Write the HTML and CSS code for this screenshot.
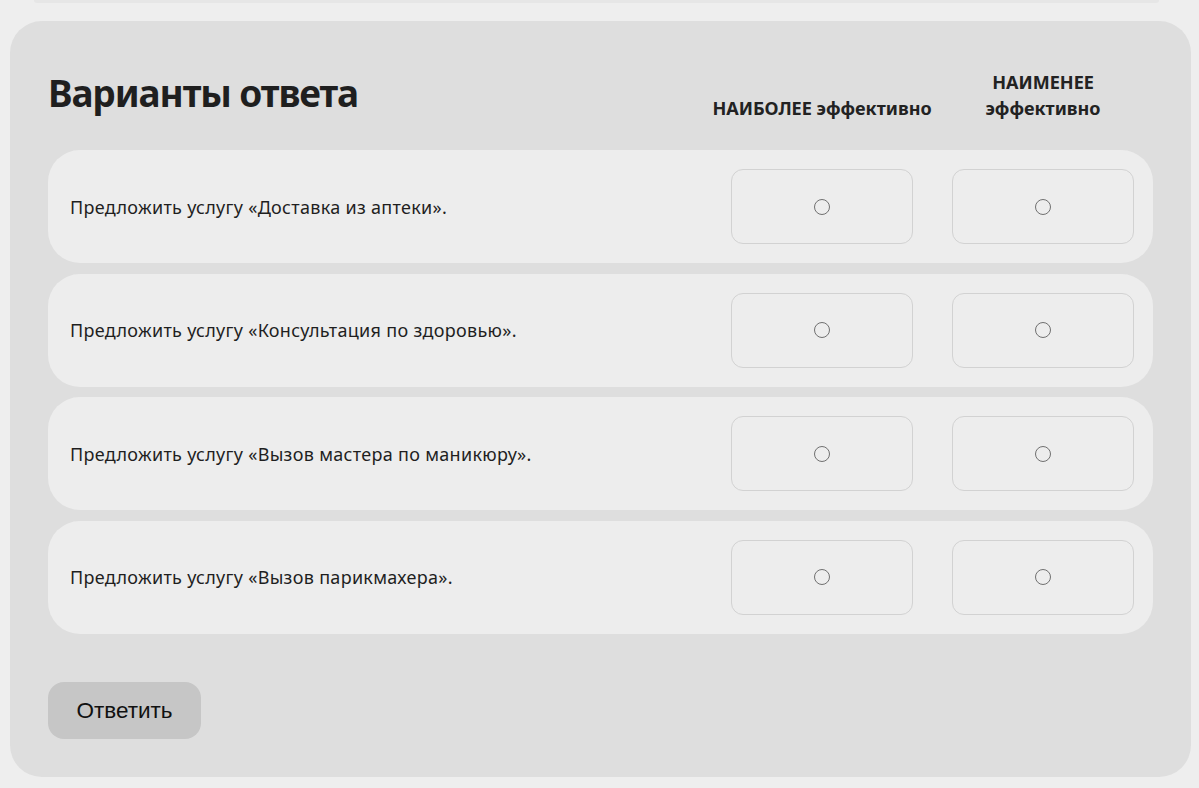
FILE: index.html
```html
<!DOCTYPE html>
<html lang="ru">
<head>
  <meta charset="UTF-8">
  <meta name="viewport" content="width=device-width, initial-scale=1.0">
  <title>Варианты ответа</title>
  <link rel="stylesheet" href="styles.css">
</head>
<body>

  <div class="page">
    <!-- Bottom edge of the previous block -->
    <div class="prev-card"></div>

    <!-- Answer options -->
    <section class="answers">
      <div class="answers-head">
        <h2>Варианты ответа</h2>
        <div class="col-title">НАИБОЛЕЕ эффективно</div>
        <div class="col-title">НАИМЕНЕЕ<br>эффективно</div>
      </div>

      <div class="option-list">
        <div class="option">
          <p>Предложить услугу «Доставка из аптеки».</p>
          <label class="cell"><input type="radio" name="most"></label>
          <label class="cell"><input type="radio" name="least"></label>
        </div>
        <div class="option">
          <p>Предложить услугу «Консультация по здоровью».</p>
          <label class="cell"><input type="radio" name="most"></label>
          <label class="cell"><input type="radio" name="least"></label>
        </div>
        <div class="option">
          <p>Предложить услугу «Вызов мастера по маникюру».</p>
          <label class="cell"><input type="radio" name="most"></label>
          <label class="cell"><input type="radio" name="least"></label>
        </div>
        <div class="option">
          <p>Предложить услугу «Вызов парикмахера».</p>
          <label class="cell"><input type="radio" name="most"></label>
          <label class="cell"><input type="radio" name="least"></label>
        </div>
      </div>

      <button class="submit">Ответить</button>
    </section>
  </div>

</body>
</html>
```

FILE: styles.css
```css
/* Basic Reset */
* {
  margin: 0;
  padding: 0;
  box-sizing: border-box;
}

body {
  font-family: "Noto Sans", "Open Sans", sans-serif;
  background-color: #eeeeee;
  color: #1f1f1f;
}

.page {
  padding: 0 8px 11px 10px;
}

.prev-card {
  height: 3px;
  margin: 0 32px 0 24px;
  background-color: #e6e6e6;
  border-radius: 0 0 24px 24px;
}

/* Answers card */
.answers {
  margin-top: 18px;
  padding: 44px 38px 38px;
  background-color: #dedede;
  border-radius: 32px;
}

.answers-head {
  display: grid;
  grid-template-columns: 1fr 182px 182px;
  column-gap: 39px;
  align-items: end;
  padding-right: 19px;
  margin-bottom: 29px;
}

.answers-head h2 {
  font-size: 37px;
  font-weight: 700;
  line-height: 56px;
  letter-spacing: -1.1px;
  align-self: start;
}

.col-title {
  margin: 0 -40px;
  font-size: 18px;
  font-weight: 700;
  line-height: 26px;
  text-align: center;
  white-space: nowrap;
  color: #222;
}

/* Option rows */
.option-list {
  display: flex;
  flex-direction: column;
  gap: 10.5px;
}

.option {
  display: grid;
  grid-template-columns: 1fr 182px 182px;
  column-gap: 39px;
  align-items: center;
  padding: 19px 19px 19px 22px;
  background-color: #ededed;
  border-radius: 32px;
}

.option p {
  font-size: 18px;
  letter-spacing: 0.3px;
  color: #1f1f1f;
}

.cell {
  display: flex;
  justify-content: center;
  align-items: center;
  height: 75px;
  border: 1px solid #d2d2d2;
  border-radius: 12px;
  cursor: pointer;
}

.cell input {
  appearance: none;
  width: 16px;
  height: 16px;
  border: 1.4px solid #707070;
  border-radius: 50%;
  background: transparent;
  cursor: pointer;
}

.cell input:checked {
  border: 4px solid #333;
}

/* Submit button */
.submit {
  display: block;
  margin-top: 48.5px;
  width: 153px;
  height: 57px;
  border: none;
  border-radius: 16px;
  background-color: #c6c6c6;
  font-family: "Liberation Sans", Arial, sans-serif;
  font-size: 22.5px;
  color: #111;
  cursor: pointer;
}
```
